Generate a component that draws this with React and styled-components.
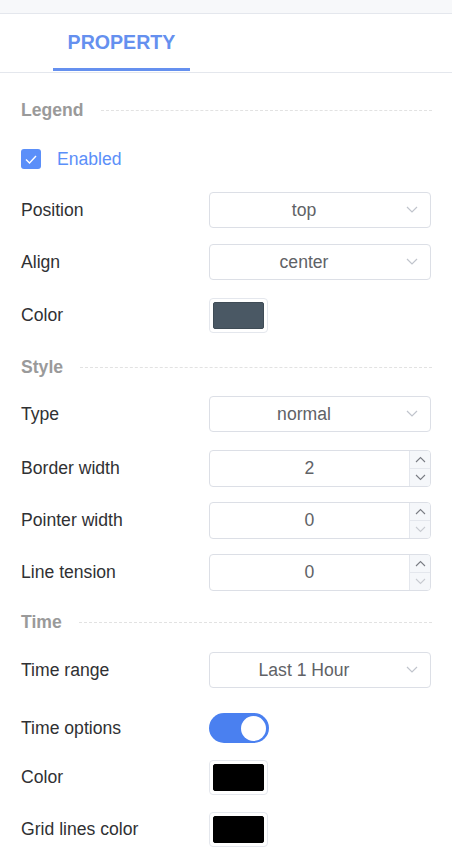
import React from "react";
import styled, { createGlobalStyle } from "styled-components";

const Global = createGlobalStyle`
  html, body { margin: 0; padding: 0; background: #ffffff; }
  body { font-family: "Liberation Sans", Arial, sans-serif; }
  * { box-sizing: border-box; }
`;

const Page = styled.div`
  width: 452px;
  min-height: 867px;
  background: #fff;
  overflow: hidden;
`;

const TopStrip = styled.div`
  height: 14px;
  background: #f7f8fa;
  border-bottom: 1px solid #e4e7ed;
`;

const TabBar = styled.div`
  display: flex;
  height: 59px;
  padding-left: 53px;
  border-bottom: 1px solid #e4e7ed;
`;

const Tab = styled.div`
  width: 137px;
  display: flex;
  align-items: center;
  justify-content: center;
  padding-top: 3px;
  font-size: 19.6px;
  font-weight: 700;
  color: #6590ef;
  border-bottom: 3px solid #6590ef;
  margin-bottom: 1px;
`;

const Content = styled.div`
  display: flex;
  flex-direction: column;
  padding: 27px 21px 0 21px;
`;

const Heading = styled.div`
  display: flex;
  align-items: center;
  gap: 17px;
  height: 20px;
  margin-top: ${(p) => p.$mt || 0}px;
  font-size: 17.6px;
  font-weight: 700;
  color: #9a9a9a;
  &::after {
    content: "";
    flex: 1;
    border-top: 1px dashed #e2e2e2;
    margin-right: -1px;
  }
`;

const Row = styled.div`
  display: grid;
  grid-template-columns: 188px 222px;
  align-items: center;
  height: ${(p) => p.$h || 36}px;
  margin-top: ${(p) => p.$mt || 16}px;
`;

const Label = styled.span`
  font-size: 17.6px;
  color: #303133;
`;

const CheckRow = styled.label`
  display: flex;
  align-items: center;
  gap: 16px;
  height: 36px;
  margin-top: ${(p) => p.$mt || 16}px;
  font-size: 17.6px;
  color: #5b8ff9;
`;

const CheckBox = styled.span`
  width: 20px;
  height: 20px;
  border-radius: 3px;
  background: #5b8ff9;
  display: flex;
  align-items: center;
  justify-content: center;
`;

const SelectBox = styled.div`
  position: relative;
  height: 36px;
  border: 1px solid #dcdfe6;
  border-radius: 4px;
  display: flex;
  align-items: center;
  justify-content: center;
  padding-right: 32px;
  font-size: 17.6px;
  color: #606266;
  background: #fff;
`;

const Chevron = styled.svg`
  position: absolute;
  right: 12px;
  top: 50%;
  margin-top: -4px;
`;

const NumberBox = styled.div`
  display: flex;
  height: 37px;
  border: 1px solid #dcdfe6;
  border-radius: 4px;
  overflow: hidden;
  background: #fff;
`;

const NumberValue = styled.div`
  flex: 1;
  display: flex;
  align-items: center;
  justify-content: center;
  font-size: 17.6px;
  color: #606266;
`;

const Spinner = styled.div`
  width: 21px;
  display: flex;
  flex-direction: column;
  border-left: 1px solid #e4e7ed;
  background: #f5f7fa;
`;

const SpinButton = styled.div`
  flex: 1;
  display: flex;
  align-items: center;
  justify-content: center;
  border-top: ${(p) => (p.$down ? "1px solid #e4e7ed" : "none")};
`;

const Swatch = styled.div`
  width: 59px;
  height: 35px;
  padding: 3px;
  border: 1px solid #e4e7ed;
  border-radius: 4px;
  background: #fff;
`;

const SwatchFill = styled.div`
  width: 100%;
  height: 100%;
  border-radius: 2px;
  border: 1px solid ${(p) => (p.$color === "#000000" ? "#000" : "#3f4c56")};
  background: ${(p) => p.$color};
`;

const Toggle = styled.div`
  width: 60px;
  height: 30px;
  border-radius: 15px;
  background: #4a80f0;
  display: flex;
  align-items: center;
  justify-content: flex-end;
  padding-right: 3px;
`;

const Knob = styled.span`
  width: 25px;
  height: 25px;
  border-radius: 50%;
  background: #fff;
`;

const Select = ({ value }) => (
  <SelectBox>
    {value}
    <Chevron width="12" height="7" viewBox="0 0 12 7">
      <path d="M1 1 L6 6 L11 1" fill="none" stroke="#c0c4cc" strokeWidth="1.2" />
    </Chevron>
  </SelectBox>
);

const Arrow = ({ up, color }) => (
  <svg width="11" height="7" viewBox="0 0 11 7">
    <path
      d={up ? "M1 6 L5.5 1.5 L10 6" : "M1 1 L5.5 5.5 L10 1"}
      fill="none"
      stroke={color}
      strokeWidth="1.1"
    />
  </svg>
);

const NumberInput = ({ value }) => {
  const atMin = value === 0;
  return (
    <NumberBox>
      <NumberValue>{value}</NumberValue>
      <Spinner>
        <SpinButton>
          <Arrow up color="#7a7d84" />
        </SpinButton>
        <SpinButton $down>
          <Arrow color={atMin ? "#c8cbd1" : "#7a7d84"} />
        </SpinButton>
      </Spinner>
    </NumberBox>
  );
};

const ColorPick = ({ color }) => (
  <Swatch>
    <SwatchFill $color={color} />
  </Swatch>
);

export default function App() {
  return (
    <Page>
      <Global />
      <TopStrip />
      <TabBar>
        <Tab>PROPERTY</Tab>
      </TabBar>
      <Content>
        <Heading>Legend</Heading>
        <CheckRow $mt={21}>
          <CheckBox>
            <svg width="12" height="9" viewBox="0 0 12 9">
              <path d="M1 4.5 L4.5 8 L11 1" fill="none" stroke="#fff" strokeWidth="1.4" />
            </svg>
          </CheckBox>
          Enabled
        </CheckRow>
        <Row $mt={15}>
          <Label>Position</Label>
          <Select value="top" />
        </Row>
        <Row>
          <Label>Align</Label>
          <Select value="center" />
        </Row>
        <Row $mt={17}>
          <Label>Color</Label>
          <ColorPick color="#4a5864" />
        </Row>

        <Heading $mt={24}>Style</Heading>
        <Row $mt={19}>
          <Label>Type</Label>
          <Select value="normal" />
        </Row>
        <Row $mt={18} $h={37}>
          <Label>Border width</Label>
          <NumberInput value={2} />
        </Row>
        <Row $mt={15} $h={37}>
          <Label>Pointer width</Label>
          <NumberInput value={0} />
        </Row>
        <Row $mt={15} $h={37}>
          <Label>Line tension</Label>
          <NumberInput value={0} />
        </Row>

        <Heading $mt={21}>Time</Heading>
        <Row $mt={20}>
          <Label>Time range</Label>
          <Select value="Last 1 Hour" />
        </Row>
        <Row $mt={22}>
          <Label>Time options</Label>
          <Toggle>
            <Knob />
          </Toggle>
        </Row>
        <Row $mt={13}>
          <Label>Color</Label>
          <ColorPick color="#000000" />
        </Row>
        <Row>
          <Label>Grid lines color</Label>
          <ColorPick color="#000000" />
        </Row>
      </Content>
    </Page>
  );
}
